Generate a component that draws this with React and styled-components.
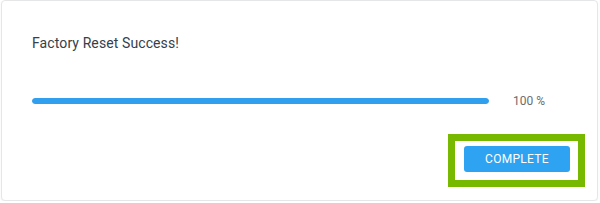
import React from "react";
import styled, { createGlobalStyle } from "styled-components";

const Global = createGlobalStyle`
  html, body { margin: 0; padding: 0; background: #ffffff; }
  body { font-family: Roboto, "Liberation Sans", Arial, sans-serif; }
  * { box-sizing: border-box; }
`;

const Card = styled.div`
  margin-left: 1px;
  width: 597px;
  height: 201px;
  border: 1px solid #e4e6e8;
  border-radius: 4px;
  box-shadow: 0 1px 2px rgba(0, 0, 0, 0.06);
  background: #ffffff;
  display: flex;
  flex-direction: column;
  padding: 32px 0 0 30px;
`;

const Title = styled.div`
  font-size: 14px;
  line-height: 20px;
  letter-spacing: 0.1px;
  color: #36404a;
`;

const ProgressRow = styled.div`
  margin-top: 41px;
  height: 14px;
  display: flex;
  align-items: center;
  gap: 24px;
`;

const Track = styled.div`
  width: 457px;
  height: 6px;
  border-radius: 3px;
  background: #e6eef5;
  overflow: hidden;
`;

const Fill = styled.div`
  height: 100%;
  background: #2f9fee;
  border-radius: 3px;
`;

const Percent = styled.span`
  font-size: 12px;
  line-height: 14px;
  color: #6c6c6c;
`;

const Footer = styled.div`
  margin-top: 26px;
  display: flex;
  justify-content: flex-end;
  padding-right: 12px;
`;

const Highlight = styled.div`
  border: 7px solid #76b900;
  padding: 5px 8px 8px 9px;
  display: flex;
`;

const Button = styled.button`
  width: 106px;
  height: 26px;
  border: none;
  border-radius: 3px;
  background: #2ea3f2;
  color: #ffffff;
  font-family: Roboto, "Liberation Sans", Arial, sans-serif;
  font-size: 12px;
  letter-spacing: 0.3px;
  text-transform: uppercase;
  cursor: pointer;
  padding: 0;
`;

export default function App() {
  const progress = 100;
  return (
    <>
      <Global />
      <Card>
        <Title>Factory Reset Success!</Title>
        <ProgressRow>
          <Track>
            <Fill style={{ width: `${progress}%` }} />
          </Track>
          <Percent>{progress} %</Percent>
        </ProgressRow>
        <Footer>
          <Highlight>
            <Button>Complete</Button>
          </Highlight>
        </Footer>
      </Card>
    </>
  );
}
